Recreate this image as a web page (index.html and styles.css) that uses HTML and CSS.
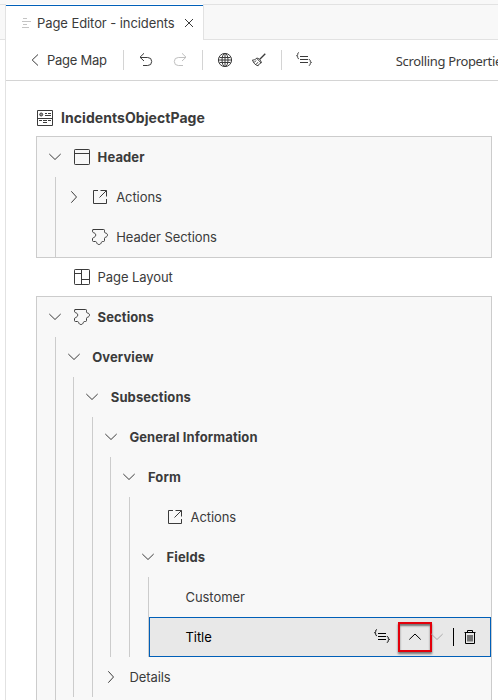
FILE: index.html
```html
<!DOCTYPE html>
<html lang="en">
<head>
<meta charset="utf-8">
<title>Page Editor - incidents</title>
<link rel="stylesheet" href="styles.css">
</head>
<body>
<svg class="defs" aria-hidden="true">
  <symbol id="down" viewBox="0 0 12 16"><path d="M.3 5 6 10.500 11.700 5"/></symbol>
  <symbol id="right" viewBox="0 0 12 16"><path d="M3.300 2.300 8.500 8l-5.200 5.700"/></symbol>
  <symbol id="up" viewBox="0 0 12 16"><path d="M.3 10.500 6 5l5.700 5.500"/></symbol>
  <symbol id="action" viewBox="0 0 16 16"><path d="M6 1.500H1.500v13h13V10M8.500 1.500h6v6M14.300 1.700 7.500 8.500"/></symbol>
  <symbol id="puzzle" viewBox="0 0 16 16"><path d="M.8.5h10.900c.6 0 .8.300.8.800v1.500c0 .7.300 1 1 1.200 1.300.3 2 1 2 2s-.7 1.900-1.800 2.200c-.8.2-1.200.6-1.200 1.300v2c0 .6-.3 1-1 1h-.8c-.8 0-1.100.3-1.400 1.100-.4 1.200-1.200 1.900-2.300 1.900s-1.900-.6-2.300-1.800c-.3-.9-.6-1.200-1.400-1.200H1.500c-.6 0-1-.3-1-1V9.800c0-.6.3-.9 1-1.200C3 8 3.700 7.200 3.700 6S3 4.200 1.600 3.700C.8 3.400.5 3 .5 2.300z"/></symbol>
  <symbol id="code" viewBox="0 0 16 16"><path d="M3 .7C1.700.7 1.700 1.500 1.700 2.500S1.400 3.600.5 3.700c.9.100 1.200.5 1.200 1.300s0 1.700 1.300 1.700M4 4.500h8M4 7.500h8M4 10.500h8M12.800 7.500c1.400 0 1.500.8 1.500 1.700s.2 1.100 1.200 1.200c-1 .1-1.200.5-1.200 1.300s-.1 1.600-1.500 1.600"/></symbol>
</svg>
<header class="tabs">
  <div class="tab">
    <svg class="lines" viewBox="0 0 10 10"><path d="M1 .5h4M0 3.500h9M1 6.500h4M0 9.500h7"/></svg>
    <span>Page Editor - incidents</span>
    <svg class="close" viewBox="0 0 10 10"><path d="m1 1 8 8M9 1 1 9"/></svg>
  </div>
</header>
<main class="editor">
  <nav class="toolbar">
    <svg class="back" viewBox="0 0 8 14"><path d="M7 1.500 1.200 7 7 12.500"/></svg>
    <span class="map">Page Map</span>
    <i class="sep"></i>
    <svg class="icon undo" viewBox="0 0 16 16"><path d="M6 1.300 2 5.200 6 9M2 5.500h7.700a3.900 3.900 0 0 1 0 8H5"/></svg>
    <svg class="icon redo" viewBox="0 0 16 16"><path d="m10 1.300 4 3.900L10 9M14 5.500H6.300a3.900 3.900 0 0 0 0 8H11"/></svg>
    <i class="sep second"></i>
    <svg class="icon globe" viewBox="0 0 16 16"><circle cx="8" cy="8" r="6.600"/><ellipse cx="8" cy="8" rx="3" ry="6.600"/><path d="M2.500 5.500h11M2.500 10.500h11M1.500 8h13M8 1.500v13"/></svg>
    <svg class="icon broom" viewBox="0 0 16 16"><path d="m14.300 1.700-5.500 5.600" stroke-width="1.300"/><path d="M5.600 6.200 10.200 11M5.600 6.200C4.500 7.800 3 7.900 1.500 8c1 3 2.700 5 5.600 5.800.5-1.500 1.600-2.400 3.100-2.800M5.600 6.200c2-.4 4.800 2.300 4.600 4.800M3.200 10.500 5 8.500M5 12.500l2-2.300"/></svg>
    <i class="sep third"></i>
    <svg class="icon code"><use href="#code"/></svg>
    <span class="scrolling">Scrolling Properties</span>
  </nav>
  <section class="outline">
    <h1 class="title"><svg class="icon" viewBox="0 0 16 16"><path d="M.5.5h15v15H.5zM.5 8.500h15M8 3.500h2M11 3.500h3M8 5.500h6M2 10.500h3M6 10.500h4M11 10.500h3M6 12.500h4"/><circle class="dot" cx="4.200" cy="4.500" r="1.500"/></svg>IncidentsObjectPage</h1>
    <div class="panel">
      <div class="row strong"><svg class="chev"><use href="#down"/></svg><svg class="icon" viewBox="0 0 16 16"><rect x=".5" y=".5" width="15" height="15" rx=".7"/><path d="M.5 4.500h15"/></svg>Header</div>
      <div class="group">
        <div class="row"><svg class="chev"><use href="#right"/></svg><svg class="icon"><use href="#action"/></svg>Actions</div>
        <div class="row"><i class="chev"></i><svg class="icon"><use href="#puzzle"/></svg>Header Sections</div>
      </div>
    </div>
    <div class="row between"><i class="chev"></i><svg class="icon" viewBox="0 0 16 16"><rect x=".5" y=".5" width="15" height="15" rx=".7"/><path d="M7.500.5v15M.5 4.500h7M7.500 10.500h8"/></svg>Page Layout</div>
    <div class="panel sections">
      <div class="row strong"><svg class="chev"><use href="#down"/></svg><svg class="icon"><use href="#puzzle"/></svg>Sections</div>
      <div class="group">
        <div class="row strong"><svg class="chev"><use href="#down"/></svg>Overview</div>
        <div class="group">
          <div class="row strong"><svg class="chev"><use href="#down"/></svg>Subsections</div>
          <div class="group">
            <div class="row strong"><svg class="chev"><use href="#down"/></svg>General Information</div>
            <div class="group">
              <div class="row strong"><svg class="chev"><use href="#down"/></svg>Form</div>
              <div class="group">
                <div class="row"><i class="chev"></i><svg class="icon"><use href="#action"/></svg>Actions</div>
                <div class="row strong"><svg class="chev"><use href="#down"/></svg>Fields</div>
                <div class="group last">
                  <div class="row"><i class="chev"></i>Customer</div>
                  <div class="row selected"><i class="chev"></i>Title
                    <div class="tools">
                      <svg class="icon"><use href="#code"/></svg>
                      <button class="move" aria-label="Move up"><svg class="arrow"><use href="#up"/></svg></button>
                      <svg class="arrow dim"><use href="#down"/></svg>
                      <i class="bar"></i>
                      <svg class="trash" viewBox="0 0 12 14"><path d="M.5 2.500h11M3.500 2.500v-2h5v2M1.500 2.500v11h9v-11M4 5v6.500M6 5v6.500M8 5v6.500"/></svg>
                    </div>
                  </div>
                </div>
              </div>
            </div>
            <div class="row"><svg class="chev"><use href="#right"/></svg>Details</div>
          </div>
        </div>
      </div>
    </div>
  </section>
</main>
</body>
</html>
```
FILE: styles.css
```css
* { box-sizing: border-box; }

body {
  margin: 0;
  height: 700px;
  overflow: hidden;
  display: flex;
  flex-direction: column;
  background: #fff;
  color: #3b3b3b;
  font: 13px/20px Inter, "Liberation Sans", sans-serif;
  letter-spacing: -.08px;
}

svg {
  flex: none;
  fill: none;
  stroke: #3b3b3b;
  stroke-width: 1;
}

.defs { position: absolute; width: 0; height: 0; }

.tabs {
  flex: none;
  height: 40px;
  padding: 4px 0 0 5px;
  background: linear-gradient(#e2e2e2, #e2e2e2) 0 4px / 100% 1px no-repeat, #f8f8f8;
  border-bottom: 1px solid #e2e2e2;
}

.tab {
  width: 199px;
  height: 36px;
  padding: 1px 0 0 16px;
  display: flex;
  align-items: center;
  background: linear-gradient(#005fb8, #005fb8) 0 1px / 100% 1px no-repeat, #fff;
  border: solid #e2e2e2;
  border-width: 0 1px;
  white-space: nowrap;
}

.lines { width: 10px; height: 10px; margin-right: 5px; stroke: #c4c4c4; }
.close { width: 10px; height: 10px; margin-left: auto; margin-right: 9px; }
.tab span { letter-spacing: -.08px; }

.editor {
  flex: 1;
  min-height: 0;
  overflow: hidden;
  margin-left: 5px;
  border-left: 1px solid #e2e2e2;
}

.toolbar {
  height: 41px;
  padding-left: 25px;
  display: flex;
  align-items: center;
  border-bottom: 1px solid #d4d4d4;
  overflow: hidden;
  white-space: nowrap;
}

.icon { width: 16px; height: 16px; }
.back { width: 8px; height: 14px; }
.map { width: 60px; margin-left: 8px; letter-spacing: -.25px; }
.sep { flex: none; width: 1px; height: 20px; background: #d4d4d4; margin-left: 16px; }
.undo { margin-left: 14px; }
.redo { margin-left: 18px; stroke: #c0c0c0; }
.second { margin-left: 14px; }
.globe { margin-left: 14px; }
.broom { margin-left: 18px; }
.third { margin-left: 14px; }
.code { margin-left: 14px; }
.scrolling {
  margin: 2px 0 0 84px;
  font-family: "Noto Sans", sans-serif;
  letter-spacing: -.35px;
}

.outline { height: 579px; padding: 27px 6px 0 30px; display: flex; flex-direction: column; }

.title {
  flex: none;
  height: 20px;
  margin: 0 0 8px;
  padding-left: 1px;
  display: flex;
  align-items: center;
  gap: 8px;
  font-size: 14px;
  font-weight: 700;
  letter-spacing: .06px;
}

.title .dot { fill: #999; }

.panel { flex: none; background: #f8f8f8; border: 1px solid #ccc; }
.sections { flex: 1; border-bottom: 0; }
.sections > .group { height: 363px; }

.row {
  flex: none;
  height: 40px;
  padding-left: 12px;
  display: flex;
  align-items: center;
  white-space: nowrap;
}

.row > .icon { margin-right: 8px; }
.row.strong { font-weight: 700; letter-spacing: .1px; }
.between { height: 38px; margin-left: 1px; }
.chev { flex: none; width: 12px; height: 16px; margin-right: 12.6px; }

.group { margin-left: 17.6px; border-left: 1px solid #ccc; }
.group.last { margin-left: 18px; }

.row.selected {
  padding-left: 11px;
  padding-right: 14px;
  background: #e8e8e8;
  border: 1px solid #005fb8;
  color: #000;
}

.tools { margin-left: auto; display: flex; align-items: center; }
.tools svg { stroke: #000; }

.move {
  width: 34px;
  height: 30px;
  margin: 0 -1px 0 8px;
  padding: 0;
  display: grid;
  place-items: center;
  background: transparent;
  border: 2px solid #e3000b;
  box-shadow: 0 2px 2px rgba(0, 0, 0, .5), inset 0 2px 2px rgba(0, 0, 0, .5);
}

.arrow { width: 12px; height: 16px; }
.tools .dim { stroke: #aaa; }
.bar { width: 1px; height: 18px; margin: 0 10px; background: #000; }
.trash { width: 12px; height: 14px; }
```
